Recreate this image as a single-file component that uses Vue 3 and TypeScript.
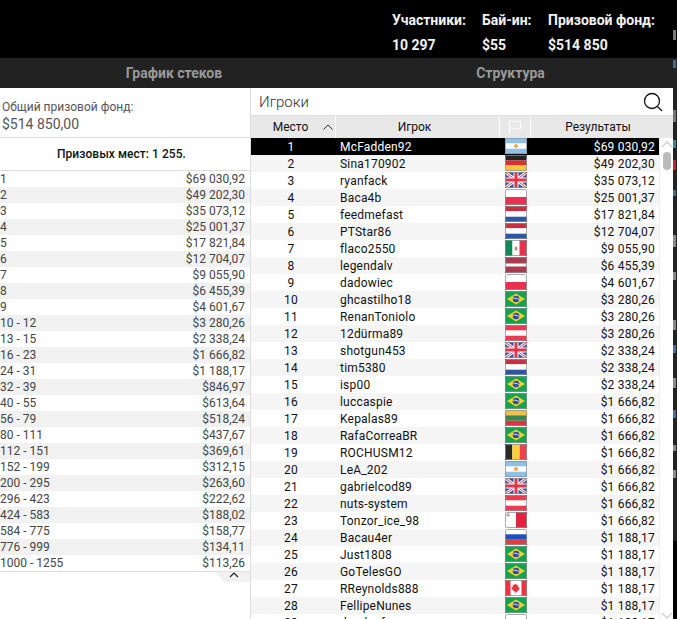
<template>
  <div class="page">
    <div class="main">
      <header class="topbar">
        <div v-for="s in stats" :key="s.label" class="stat" :style="{ width: s.width + 'px' }">
          <span>{{ s.label }}</span>
          <span>{{ s.value }}</span>
        </div>
      </header>

      <nav class="tabs">
        <div class="tab tab-stacks">График стеков</div>
        <div class="tab tab-structure">Структура</div>
      </nav>

      <div class="content">
        <aside class="prizes">
          <div class="pool">
            <div class="pool-label">Общий призовой фонд:</div>
            <div class="pool-value">$514 850,00</div>
          </div>
          <div class="paid">Призовых мест: 1 255.</div>
          <div class="prize-list">
            <div v-for="p in prizes" :key="p[0]" class="prize-row">
              <span>{{ p[0] }}</span>
              <span>{{ p[1] }}</span>
            </div>
          </div>
          <div class="collapse-row">
            <div class="collapse">
              <svg width="10" height="6" viewBox="0 0 10 6">
                <path d="M1 5l4-4 4 4" fill="none" stroke="#222" stroke-width="1.2" />
              </svg>
            </div>
          </div>
        </aside>

        <section class="players">
          <div class="search">
            <span>Игроки</span>
            <svg class="search-icon" width="20" height="20" viewBox="0 0 20 20">
              <circle cx="9" cy="9" r="7.5" fill="none" stroke="#111" stroke-width="1.3" />
              <path d="M14.5 14.5l4.5 4.5" stroke="#111" stroke-width="1.3" />
            </svg>
          </div>

          <div class="thead">
            <div class="th th-place">
              <span>Место</span>
              <svg class="sort" width="10" height="6" viewBox="0 0 10 6">
                <path d="M.5 5.5l4.5-4.5 4.5 4.5" fill="none" stroke="#333" stroke-width="1" />
              </svg>
            </div>
            <div class="th th-name">Игрок</div>
            <div class="th">
              <svg width="14" height="14" viewBox="0 0 14 14">
                <path d="M1.5 14V1c3-1.2 4.500 1 7 1 1.500 0 3-.3 4-.6v7.200c-1 .3-2.500.6-4 .6-2.500 0-4-2-7-1" fill="none" stroke="#fff" stroke-width="1" />
              </svg>
            </div>
            <div class="th">Результаты</div>
          </div>

          <div class="tbody">
            <div class="rows">
              <div v-for="(r, i) in players" :key="r[0]" class="row" :class="{ selected: i === 0 }">
                <span class="rank">{{ i + 1 }}</span>
                <span class="name">{{ r[0] }}</span>
                <span class="flag-cell">
                  <svg class="flag" width="22" height="16" viewBox="0 0 22 16">
                    <template v-if="r[1] === 'ar'">
                      <rect width="22" height="16" fill="#8fc1e8" />
                      <rect y="5.300" width="22" height="5.400" fill="#fff" />
                      <circle cx="11" cy="8" r="2" fill="#f2a93b" />
                    </template>
                    <template v-else-if="r[1] === 'de'">
                      <rect width="22" height="5.500" fill="#222" />
                      <rect y="5.500" width="22" height="5" fill="#dc2f2f" />
                      <rect y="10.500" width="22" height="5.500" fill="#f6c83b" />
                    </template>
                    <template v-else-if="r[1] === 'gb'">
                      <rect width="22" height="16" fill="#2f4f9c" />
                      <path d="M0 0l22 16M22 0L0 16" stroke="#fff" stroke-width="3" />
                      <path d="M0 0l22 16M22 0L0 16" stroke="#e0354a" stroke-width="1" />
                      <path d="M11 0v16M0 8h22" stroke="#fff" stroke-width="5" />
                      <path d="M11 0v16M0 8h22" stroke="#e0354a" stroke-width="3" />
                    </template>
                    <template v-else-if="r[1] === 'pl'">
                      <rect width="22" height="8" fill="#fff" />
                      <rect y="8" width="22" height="8" fill="#e8304f" />
                    </template>
                    <template v-else-if="r[1] === 'nl'">
                      <rect width="22" height="5.300" fill="#c9303f" />
                      <rect y="5.300" width="22" height="5.400" fill="#fff" />
                      <rect y="10.700" width="22" height="5.300" fill="#2f55a5" />
                    </template>
                    <template v-else-if="r[1] === 'mx'">
                      <rect width="7.500" height="16" fill="#0f8a56" />
                      <rect x="7.500" width="7" height="16" fill="#fff" />
                      <rect x="14.500" width="7.500" height="16" fill="#e0354a" />
                      <path d="M9.500 9.500c1 1.300 2 1.300 3 0l-.7-2.500-.8-1-.8 1z" fill="#b08a58" />
                    </template>
                    <template v-else-if="r[1] === 'lv'">
                      <rect width="22" height="16" fill="#a83b4d" />
                      <rect y="6.500" width="22" height="3" fill="#fff" />
                    </template>
                    <template v-else-if="r[1] === 'br'">
                      <rect width="22" height="16" fill="#12a34f" />
                      <path d="M11 2.500L20 8l-9 5.500L2 8z" fill="#f5cf2f" />
                      <circle cx="11" cy="8" r="3.300" fill="#2f4f9c" />
                      <path d="M7.900 7.300c2-.4 4.300 0 6.100 1.300" fill="none" stroke="#fff" stroke-width=".8" />
                    </template>
                    <template v-else-if="r[1] === 'at'">
                      <rect width="22" height="16" fill="#ea3b50" />
                      <rect y="5.300" width="22" height="5.400" fill="#fff" />
                    </template>
                    <template v-else-if="r[1] === 'lt'">
                      <rect width="22" height="5.300" fill="#f4c04a" />
                      <rect y="5.300" width="22" height="5.400" fill="#2f8a53" />
                      <rect y="10.700" width="22" height="5.300" fill="#d7383f" />
                    </template>
                    <template v-else-if="r[1] === 'be'">
                      <rect width="7.300" height="16" fill="#2a2a2a" />
                      <rect x="7.300" width="7.400" height="16" fill="#f8cf3d" />
                      <rect x="14.700" width="7.300" height="16" fill="#ee4150" />
                    </template>
                    <template v-else-if="r[1] === 'mt'">
                      <rect width="11" height="16" fill="#fff" />
                      <rect x="11" width="11" height="16" fill="#df2440" />
                      <rect x="1.500" y="1.500" width="3" height="3" rx="1" fill="#aaa" />
                    </template>
                    <template v-else-if="r[1] === 'ru'">
                      <rect width="22" height="5.300" fill="#fff" />
                      <rect y="5.300" width="22" height="5.400" fill="#1c4fc0" />
                      <rect y="10.700" width="22" height="5.300" fill="#e0403a" />
                    </template>
                    <template v-else-if="r[1] === 'ca'">
                      <rect width="22" height="16" fill="#fff" />
                      <rect width="5.500" height="16" fill="#ee3340" />
                      <rect x="16.500" width="5.500" height="16" fill="#ee3340" />
                      <path d="M11 3.500l1 2 1.300-.5-.4 2.500 1.600-.6-.5 1.600 1 .5-2.500 2-.5 1h-1.200v1.500h-.6V11.500H9l-.5-1-2.500-2 1-.5-.5-1.600 1.600.6-.4-2.500 1.300.5z" fill="#ee3340" />
                    </template>
                    <rect v-else width="22" height="16" fill="#fff" />
                    <rect x=".5" y=".5" width="21" height="15" rx="1.500" fill="none" stroke="#8a8f96" stroke-opacity=".75" />
                  </svg>
                </span>
                <span class="result">{{ r[2] }}</span>
              </div>
            </div>
            <div class="scrollbar">
              <svg width="12" height="7" viewBox="0 0 12 7">
                <path d="M1 6l5-5 5 5" fill="none" stroke="#cfcfcf" stroke-width="1.300" />
              </svg>
              <div class="thumb"></div>
              <div class="scroll-space"></div>
              <svg width="12" height="7" viewBox="0 0 12 7">
                <path d="M1 1l5 5 5-5" fill="none" stroke="#cfcfcf" stroke-width="1.300" />
              </svg>
            </div>
          </div>
        </section>
      </div>
    </div>

    <div class="behind">
      <i v-for="m in marks" :key="m[0]" :style="{ top: m[0] + 'px', height: m[1] + 'px', background: m[2] }"></i>
    </div>
  </div>
</template>

<script setup lang="ts">
const stats = [
  { label: 'Участники:', value: '10 297', width: 90 },
  { label: 'Бай-ин:', value: '$55', width: 66 },
  { label: 'Призовой фонд:', value: '$514 850', width: 125 },
]

const prizes: [string, string][] = [
  ['1', '$69 030,92'],
  ['2', '$49 202,30'],
  ['3', '$35 073,12'],
  ['4', '$25 001,37'],
  ['5', '$17 821,84'],
  ['6', '$12 704,07'],
  ['7', '$9 055,90'],
  ['8', '$6 455,39'],
  ['9', '$4 601,67'],
  ['10 - 12', '$3 280,26'],
  ['13 - 15', '$2 338,24'],
  ['16 - 23', '$1 666,82'],
  ['24 - 31', '$1 188,17'],
  ['32 - 39', '$846,97'],
  ['40 - 55', '$613,64'],
  ['56 - 79', '$518,24'],
  ['80 - 111', '$437,67'],
  ['112 - 151', '$369,61'],
  ['152 - 199', '$312,15'],
  ['200 - 295', '$263,60'],
  ['296 - 423', '$222,62'],
  ['424 - 583', '$188,02'],
  ['584 - 775', '$158,77'],
  ['776 - 999', '$134,11'],
  ['1000 - 1255', '$113,26'],
]

const players: [string, string, string][] = [
  ['McFadden92', 'ar', '$69 030,92'],
  ['Sina170902', 'de', '$49 202,30'],
  ['ryanfack', 'gb', '$35 073,12'],
  ['Baca4b', 'pl', '$25 001,37'],
  ['feedmefast', 'nl', '$17 821,84'],
  ['PTStar86', 'nl', '$12 704,07'],
  ['flaco2550', 'mx', '$9 055,90'],
  ['legendalv', 'lv', '$6 455,39'],
  ['dadowiec', 'pl', '$4 601,67'],
  ['ghcastilho18', 'br', '$3 280,26'],
  ['RenanToniolo', 'br', '$3 280,26'],
  ['12dürma89', 'at', '$3 280,26'],
  ['shotgun453', 'gb', '$2 338,24'],
  ['tim5380', 'nl', '$2 338,24'],
  ['isp00', 'br', '$2 338,24'],
  ['luccaspie', 'br', '$1 666,82'],
  ['Kepalas89', 'lt', '$1 666,82'],
  ['RafaCorreaBR', 'br', '$1 666,82'],
  ['ROCHUSM12', 'be', '$1 666,82'],
  ['LeA_202', 'ar', '$1 666,82'],
  ['gabrielcod89', 'gb', '$1 666,82'],
  ['nuts-system', 'at', '$1 666,82'],
  ['Tonzor_ice_98', 'mt', '$1 666,82'],
  ['Bacau4er', 'ru', '$1 188,17'],
  ['Just1808', 'br', '$1 188,17'],
  ['GoTelesGO', 'br', '$1 188,17'],
  ['RReynolds888', 'ca', '$1 188,17'],
  ['FellipeNunes', 'br', '$1 188,17'],
  ['dandusf', 'none', '$1 188,17'],
]

// bits of the window behind that show along the right edge
const marks: [number, number, string][] = [
  [30, 10, '#777'],
  [60, 8, '#4a6a80'],
  [110, 12, '#777'],
  [140, 8, '#3f7f8f'],
  [160, 10, '#c0242c'],
  [190, 6, '#4a6a80'],
  [235, 12, '#888'],
  [272, 8, '#888'],
  [320, 10, '#888'],
  [345, 8, '#3f6f9f'],
  [378, 10, '#888'],
  [410, 8, '#3f6f9f'],
  [445, 6, '#888'],
  [470, 8, '#888'],
]
</script>

<style>
html,
body {
  margin: 0;
  background: #000;
}
</style>

<style scoped>
.page {
  display: flex;
  width: 677px;
  height: 619px;
  overflow: hidden;
  font-family: Roboto, "Liberation Sans", sans-serif;
}

.main {
  width: 673px;
  flex: none;
  display: flex;
  flex-direction: column;
}

.topbar {
  height: 58px;
  background: #000;
  color: #f2f2f2;
  display: flex;
  justify-content: flex-end;
  padding-top: 13px;
  box-sizing: border-box;
  font-size: 14px;
  font-weight: 700;
}

.stat {
  display: flex;
  flex-direction: column;
  gap: 10px;
  line-height: 15px;
  white-space: nowrap;
}

.tabs {
  height: 30px;
  background: #222;
  display: flex;
  color: #999;
  font-size: 14px;
  font-weight: 700;
  line-height: 30px;
  text-align: center;
}

.tab-stacks {
  width: 348px;
}

.tab-structure {
  flex: 1;
}

.content {
  flex: 1;
  display: flex;
  background: #fff;
  min-height: 0;
}

.prizes {
  width: 250px;
  flex: none;
  border-right: 1px solid #ddd;
  color: #444;
  font-size: 12px;
}

.pool {
  height: 50px;
  box-sizing: border-box;
  padding: 12px 0 0 2px;
  border-bottom: 1px solid #ddd;
  color: #555;
}

.pool-label {
  line-height: 15px;
}

.pool-value {
  line-height: 18px;
  font-size: 14px;
}

.paid {
  height: 33px;
  box-sizing: border-box;
  border-bottom: 1px solid #ddd;
  line-height: 32px;
  text-align: center;
  color: #111;
  font-weight: 500;
  letter-spacing: 0.05px;
  padding-right: 7px;
}

.prize-row {
  height: 16px;
  line-height: 16px;
  display: flex;
  justify-content: space-between;
  padding-right: 5px;
}

.prize-row:nth-child(even) {
  background: #f1f1f1;
}

.prize-list {
  border-bottom: 1px solid #ddd;
}

.collapse-row {
  display: flex;
  justify-content: flex-end;
}

.collapse {
  width: 32px;
  height: 10px;
  background: #f1f1f1;
  clip-path: polygon(0 0, 100% 0, 100% 100%, 25% 100%);
  display: flex;
  justify-content: center;
  align-items: flex-start;
  padding-left: 3px;
}

.players {
  flex: 1;
  min-width: 0;
  display: flex;
  flex-direction: column;
  color: #111;
}

.search {
  height: 27px;
  flex: none;
  display: flex;
  align-items: center;
  justify-content: space-between;
  padding: 0 10px 0 8px;
  box-sizing: border-box;
  color: #333;
  font-size: 15px;
  font-weight: 300;
}

.search-icon {
  margin-top: 1px;
}

.thead {
  height: 23px;
  flex: none;
  box-sizing: border-box;
  display: grid;
  grid-template-columns: 85px 164px 31px 1fr;
  background: #e8e8e8;
  border-top: 1px solid #ddd;
  font-size: 12px;
  color: #111;
}

.th {
  display: flex;
  align-items: center;
  justify-content: center;
  border-right: 1px solid #fff;
}

.th:last-child {
  border-right: 0;
  padding-right: 8px;
}

.th-place {
  position: relative;
  padding-right: 5px;
}

.th-name {
  padding-right: 6px;
}

.sort {
  position: absolute;
  right: 2px;
  top: 8px;
}

.tbody {
  flex: 1;
  display: flex;
  min-height: 0;
  overflow: hidden;
}

.rows {
  width: 408px;
  flex: none;
}

.row {
  height: 17px;
  line-height: 19px;
  display: grid;
  grid-template-columns: 80px 169px 30px 1fr;
  font-size: 12px;
  letter-spacing: 0.2px;
}

.row:nth-child(even) {
  background: #f5f5f5;
}

.row.selected {
  background: #000;
  color: #fff;
}

.rank {
  text-align: center;
}

.name {
  padding-left: 9px;
}

.flag-cell {
  display: flex;
  padding-left: 5px;
}

.flag {
  display: block;
}

.result {
  text-align: right;
  padding-right: 4px;
}

.scrollbar {
  flex: 1;
  display: flex;
  flex-direction: column;
  align-items: center;
  padding-top: 3px;
  border-left: 1px solid #eee;
}

.thumb {
  width: 8px;
  height: 18px;
  margin-top: 4px;
  border-radius: 4px;
  background: #bbb;
}

.scroll-space {
  flex: 1;
}

.behind {
  flex: 1;
  position: relative;
  background: linear-gradient(#000 58px, #222 58px, #222 541px, #000 541px);
}

.behind i {
  position: absolute;
  left: 0;
  width: 3px;
}
</style>
